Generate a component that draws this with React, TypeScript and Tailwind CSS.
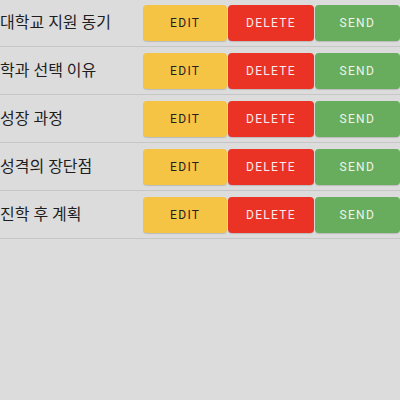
export default function App() {
  const items = ["대학교 지원 동기", "학과 선택 이유", "성장 과정", "성격의 장단점", "진학 후 계획"];

  return (
    <div className="w-[400px] h-[400px] overflow-hidden bg-[#dcdcdc] font-['Roboto','Noto_Sans_CJK_KR',sans-serif]">
      <div className="-mt-px">
        {items.map((label, idx) => (
          <div key={idx} className="flex items-center h-[48px] border-b border-[#c6c6c6] pt-px">
            <div className="flex-1 text-[16px] text-[#1e1e1e] whitespace-nowrap">{label}</div>
            <div className="flex w-[257px] shrink-0 gap-px">
              <button className="w-[85px] h-[36px] rounded-[4px] bg-[#f6c444] text-[#222] text-[12px] font-normal tracking-[1.3px] shadow-[0_1px_1px_rgba(0,0,0,0.15)]">
                EDIT
              </button>
              <button className="w-[86px] h-[36px] rounded-[4px] bg-[#ea3324] text-[#fbeaea] text-[12px] font-normal tracking-[1.3px] shadow-[0_1px_1px_rgba(0,0,0,0.15)]">
                DELETE
              </button>
              <button className="w-[86px] h-[36px] rounded-[4px] bg-[#67ad5d] text-[#eef4ec] text-[12px] font-normal tracking-[1.3px] shadow-[0_1px_1px_rgba(0,0,0,0.15)]">
                SEND
              </button>
            </div>
          </div>
        ))}
      </div>
    </div>
  );
}
